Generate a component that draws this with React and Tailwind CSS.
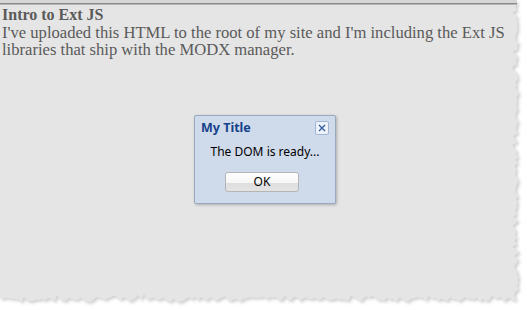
import React from 'react';

// torn paper outline, deterministic jitter
function tornPath() {
  let seed = 7;
  const rnd = () => {
    seed = (seed * 9301 + 49297) % 233280;
    return seed / 233280;
  };
  const pts = [[0, 0], [516, 0]];
  for (let y = 4; y < 296; y += 3) {
    pts.push([515 + rnd() * 4 - (rnd() > 0.85 ? 3 : 0), y]);
  }
  for (let x = 516; x > 0; x -= 3) {
    pts.push([x, 297 + rnd() * 5 - (rnd() > 0.85 ? 3 : 0)]);
  }
  pts.push([0, 299]);
  return 'M' + pts.map((p) => `${p[0].toFixed(1)},${p[1].toFixed(1)}`).join(' L') + ' Z';
}

const PAPER = tornPath();

function Dialog() {
  return (
    <div className="absolute left-[194px] top-[115px] w-[142px] h-[89px] border border-[#98a9c0] bg-[#cfdaea] rounded-[2px] shadow-[1px_1px_3px_rgba(0,0,0,0.25)] font-['Noto_Sans',sans-serif]">
      <div className="flex items-center justify-between pl-[6px] pr-[6px] pt-[4px] h-[20px]">
        <span className="text-[12.5px] font-bold text-[#15428b] leading-none">My Title</span>
        <span className="flex items-center justify-center w-[14px] h-[14px] border border-[#9fb6d6] bg-[#eef3fa] rounded-[2px]">
          <svg width="10" height="10" viewBox="0 0 10 10">
            <path d="M2 2 L8 8 M8 2 L2 8" stroke="#2e5aa0" strokeWidth="1.3" />
          </svg>
        </span>
      </div>
      <div className="text-center text-[12px] text-black mt-[10px] leading-none">The DOM is ready...</div>
      <div className="flex justify-center mt-[14px]">
        <button className="w-[74px] h-[20px] rounded-[3px] border border-[#b5b5b5] bg-[linear-gradient(#ffffff_0%,#f6f6f6_55%,#dedede_56%,#e4e4e4_100%)] text-[12px] text-black leading-none ml-[-6px]">
          OK
        </button>
      </div>
    </div>
  );
}

export default function App() {
  return (
    <div className="relative w-[527px] h-[310px] bg-white overflow-hidden">
      <svg className="absolute inset-0" width="527" height="310">
        <defs>
          <filter id="sh" x="-5%" y="-5%" width="110%" height="110%">
            <feGaussianBlur stdDeviation="1.4" />
          </filter>
        </defs>
        <path d={PAPER} fill="#9a9a9a" opacity="0.45" transform="translate(2,2)" filter="url(#sh)" />
        <path d={PAPER} fill="#e5e5e5" />
        <rect x="0" y="0" width="517" height="3" fill="#d6d6d6" />
        <rect x="0" y="3" width="517" height="1.5" fill="#8a8a8a" />
      </svg>
      <div className="relative pt-[6px] pl-[2px] pr-[10px] leading-[17.5px] text-[#5a5a5a] font-['Liberation_Serif',serif]">
        <h1 className="text-[16px] font-bold">Intro to Ext JS</h1>
        <p className="text-[16.6px]">
          I've uploaded this HTML to the root of my site and I'm including the Ext JS libraries that ship with
          the MODX manager.
        </p>
      </div>
      <Dialog />
    </div>
  );
}
